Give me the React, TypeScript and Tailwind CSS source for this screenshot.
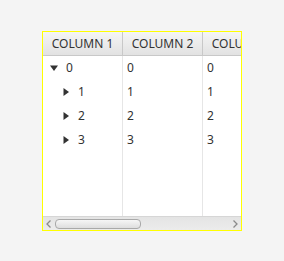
import React from "react";

const rows = [
  { label: "0", level: 0, open: true },
  { label: "1", level: 1, open: false },
  { label: "2", level: 1, open: false },
  { label: "3", level: 1, open: false },
];

function Arrow({ open }: { open: boolean }) {
  return open ? (
    <svg width="8" height="8" viewBox="0 0 8 8" className="shrink-0">
      <path d="M0 1.5L8 1.5L4 7Z" fill="#333" />
    </svg>
  ) : (
    <svg width="8" height="8" viewBox="0 0 8 8" className="shrink-0">
      <path d="M1.5 0L7 4L1.5 8Z" fill="#333" />
    </svg>
  );
}

export default function App() {
  return (
    <div className="w-[284px] h-[261px] bg-[#f4f4f4] pt-[31px] pl-[42px] font-['Noto_Sans',sans-serif] text-[12px] text-[#333]">
      <div className="w-[200px] h-[200px] border border-[#ffff00] bg-white flex flex-col overflow-hidden">
        <div className="flex-1 flex flex-col overflow-hidden">
          {/* header */}
          <div className="flex h-[24px] shrink-0 border-b border-[#c8c8c8] bg-gradient-to-b from-[#f5f5f5] to-[#e2e2e2]">
            {["COLUMN 1", "COLUMN 2", "COLUMN 3"].map((c) => (
              <div
                key={c}
                className="w-[80px] shrink-0 flex items-center justify-center border-r border-[#c8c8c8] whitespace-nowrap"
              >
                {c}
              </div>
            ))}
          </div>
          {/* body */}
          <div className="flex-1 flex">
            <div className="w-[80px] shrink-0 border-r border-[#e6e6e6]">
              {rows.map((r) => (
                <div
                  key={r.label}
                  className={`h-[24px] flex items-center gap-[8px] ${r.level === 0 ? "pl-[7px]" : "pl-[19px]"}`}
                >
                  <Arrow open={r.open} />
                  <span>{r.label}</span>
                </div>
              ))}
            </div>
            <div className="w-[80px] shrink-0 border-r border-[#e6e6e6]">
              {rows.map((r) => (
                <div key={r.label} className="h-[24px] flex items-center pl-[4px]">
                  {r.label}
                </div>
              ))}
            </div>
            <div className="w-[80px] shrink-0">
              {rows.map((r) => (
                <div key={r.label} className="h-[24px] flex items-center pl-[4px]">
                  {r.label}
                </div>
              ))}
            </div>
          </div>
        </div>
        {/* horizontal scrollbar */}
        <div className="h-[14px] shrink-0 flex items-center border-t border-[#d6d6d6] bg-gradient-to-b from-[#e4e4e4] to-[#ececec]">
          <svg width="10" height="10" viewBox="0 0 10 10" className="ml-[1px] shrink-0">
            <path d="M6.5 1.5L3 5L6.5 8.5" stroke="#8a8a8a" strokeWidth="1.3" fill="none" />
          </svg>
          <div className="ml-[1px] w-[86px] h-[10px] rounded-[4px] border border-[#a9a9a9] bg-gradient-to-b from-[#f6f6f6] to-[#dedede]" />
          <div className="flex-1" />
          <svg width="10" height="10" viewBox="0 0 10 10" className="mr-[1px] shrink-0">
            <path d="M3.5 1.5L7 5L3.5 8.5" stroke="#8a8a8a" strokeWidth="1.3" fill="none" />
          </svg>
        </div>
      </div>
    </div>
  );
}
